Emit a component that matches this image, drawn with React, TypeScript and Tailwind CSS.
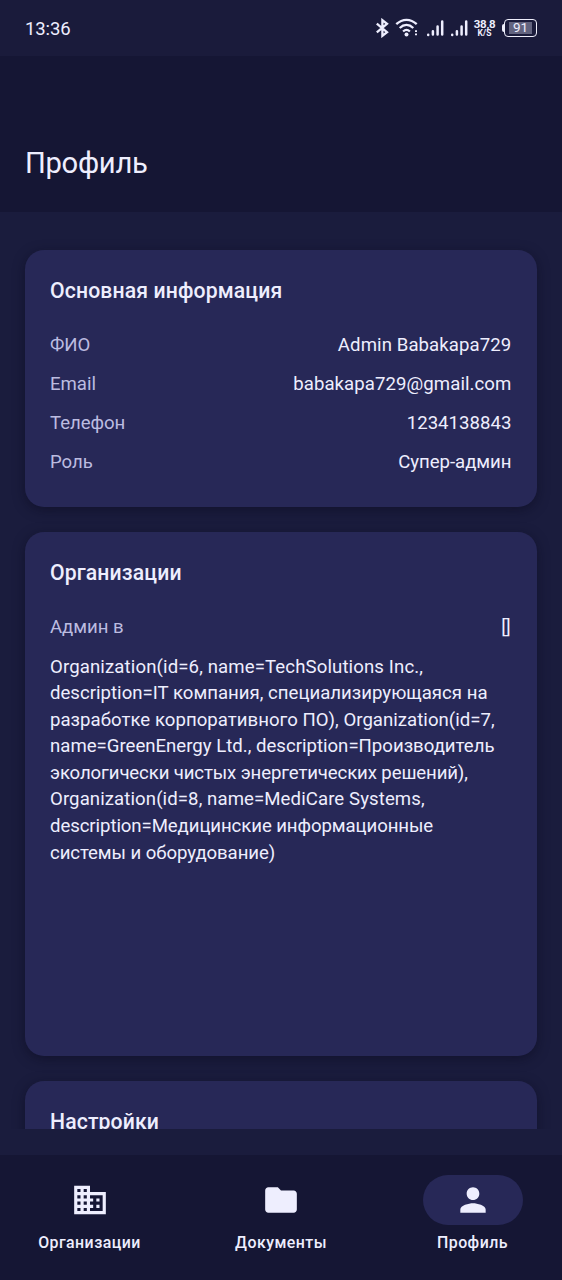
import type { ReactNode } from "react";

const profile = [
  { label: "ФИО", value: "Admin Babakapa729", tracking: "tracking-[0.09px]" },
  { label: "Email", value: "babakapa729@gmail.com", tracking: "tracking-[0.07px]" },
  { label: "Телефон", value: "1234138843", tracking: "tracking-[0.02px]" },
  { label: "Роль", value: "Супер-админ", tracking: "tracking-[-0.05px]" },
];

const organizationLines = [
  { text: "Organization(id=6, name=TechSolutions Inc.,", tracking: "tracking-[0.12px]" },
  { text: "description=IT компания, специализирующаяся на", tracking: "tracking-[0.01px]" },
  { text: "разработке корпоративного ПО), Organization(id=7,", tracking: "tracking-[0.03px]" },
  { text: "name=GreenEnergy Ltd., description=Производитель", tracking: "tracking-[0px]" },
  { text: "экологически чистых энергетических решений),", tracking: "tracking-[-0.12px]" },
  { text: "Organization(id=8, name=MediCare Systems,", tracking: "tracking-[0.09px]" },
  { text: "description=Медицинские информационные", tracking: "tracking-[-0.08px]" },
  { text: "системы и оборудование)", tracking: "tracking-[-0.08px]" },
];

function SignalIcon() {
  return (
    <svg className="h-[18px] w-[18px]" viewBox="0 0 18 18" fill="none" stroke="currentColor" strokeWidth="2.5" strokeLinecap="round">
      <path d="M2.2 15.8v.1M6.9 15.6v-3.3M11.6 15.6V7.4M16.2 15.6V2.4" />
    </svg>
  );
}

function StatusBar() {
  return (
    <div className="flex h-14 shrink-0 items-center justify-between bg-[#1a1b3b] px-[25px]">
      <span className="pt-[2px] text-[18.5px] leading-none tracking-[-0.1px]">13:36</span>
      <div className="flex items-center">
        <svg className="h-5 w-[14px]" viewBox="0 0 14 20" fill="none" stroke="currentColor" strokeWidth="2.3">
          <path d="M1.8 5.6 12 14.2 7.4 17.8V2.2L12 5.8 1.8 14.4" />
        </svg>
        <svg className="ml-[6px] h-5 w-6" viewBox="0 0 24 20" fill="none" stroke="currentColor" strokeWidth="2.3">
          <path d="M1.3 6.2C7.5.3 15.5.3 21.7 6.2M4.7 10c4.2-4 9.4-4 13.6 0M8.1 13.5c2.1-2 4.7-2 6.8 0" />
          <circle cx="11.5" cy="16.4" r="2" fill="currentColor" stroke="none" />
          <path d="M20 13.2h2M20 16.4h2" strokeWidth="1.8" />
        </svg>
        <div className="ml-[7px] flex gap-[6px]">
          <SignalIcon />
          <SignalIcon />
        </div>
        <div className="ml-[6px] flex w-[22px] flex-col items-center font-bold">
          <span className="text-[11.5px] leading-[10px] tracking-[-0.3px]">38,8</span>
          <span className="text-[8.5px] leading-[9px]">K/S</span>
        </div>
        <div className="ml-[6px] flex items-center">
          <span className="h-2 w-[2.5px] rounded-l-full bg-[#eeeefb]" />
          <div className="flex h-[18px] w-[33px] items-center justify-center rounded-[4px] border-[1.5px] border-[#eeeefb] px-[4px] py-[2px]">
            <span className="flex h-full w-full items-center justify-center bg-[#62637f] text-[13.5px] leading-none">91</span>
          </div>
        </div>
      </div>
    </div>
  );
}

function Card({ title, className, children }: { title: string; className: string; children?: ReactNode }) {
  return (
    <section className={`shrink-0 rounded-[19px] bg-[#272857] px-[25px] pt-[25px] shadow-[0_3px_12px_rgba(10,10,30,0.5)] ${className}`}>
      <h2 className="text-[21.2px] leading-[31.8px] font-medium tracking-[0.13px]">{title}</h2>
      {children}
    </section>
  );
}

function InfoRow({ label, value, tracking }: { label: string; value: string; tracking: string }) {
  return (
    <div className="flex h-[39px] items-center justify-between pr-[0.6px] text-[18.6px]">
      <span className="tracking-[-0.03px] text-[#bcbce0]">{label}</span>
      <span className={tracking}>{value}</span>
    </div>
  );
}

function NavItem({ label, active, path }: { label: string; active?: boolean; path: string }) {
  return (
    <button className="flex flex-1 flex-col items-center pt-5">
      <span className={`flex h-[50px] w-[100px] items-center justify-center rounded-full ${active ? "bg-[#272857]" : ""}`}>
        <svg className="h-[38px] w-[38px]" viewBox="0 0 24 24" fill="currentColor">
          <path d={path} />
        </svg>
      </span>
      <span className="mt-[7px] text-[15.9px] leading-[21px] font-medium tracking-[0.46px]">{label}</span>
    </button>
  );
}

export default function App() {
  return (
    <div className="flex h-[1280px] w-[562px] flex-col overflow-hidden bg-[#1a1c3d] font-[Roboto,sans-serif] text-[#eeeefe]">
      <StatusBar />
      <header className="flex h-[156px] shrink-0 items-end bg-[#151634] px-[25px] pb-[30px]">
        <h1 className="text-[29.2px] leading-[38px] tracking-[-0.3px]">Профиль</h1>
      </header>
      <main className="mb-[26px] flex min-h-0 flex-1 flex-col gap-[25px] overflow-hidden px-[25px] pt-[38px]">
        <Card title="Основная информация" className="h-[257px]">
          <div className="mt-[19.6px]">
            {profile.map((row) => (
              <InfoRow key={row.label} {...row} />
            ))}
          </div>
        </Card>
        <Card title="Организации" className="h-[524px]">
          <div className="mt-[19.6px]">
            <InfoRow label="Админ в" value="[]" tracking="tracking-[-0.3px] pr-px" />
          </div>
          <p className="mt-[6.3px] text-[18.6px] leading-[26.55px] whitespace-nowrap">
            {organizationLines.map(({ text, tracking }) => (
              <span key={text} className={`block ${tracking}`}>{text}</span>
            ))}
          </p>
        </Card>
        <Card title="Настройки" className="h-[257px]" />
      </main>
      <nav className="flex h-[125px] shrink-0 gap-[12.5px] bg-[#151634]">
        <NavItem
          label="Организации"
          path="M12 7V3H2v18h20V7H12zM6 19H4v-2h2v2zm0-4H4v-2h2v2zm0-4H4V9h2v2zm0-4H4V5h2v2zm4 12H8v-2h2v2zm0-4H8v-2h2v2zm0-4H8V9h2v2zm0-4H8V5h2v2zm10 12h-8v-2h2v-2h-2v-2h2v-2h-2V9h8v10zm-2-8h-2v2h2v-2zm0 4h-2v2h2v-2z"
        />
        <NavItem
          label="Документы"
          path="M10 4H4c-1.1 0-1.99.9-1.99 2L2 18c0 1.1.9 2 2 2h16c1.1 0 2-.9 2-2V8c0-1.1-.9-2-2-2h-8l-2-2z"
        />
        <NavItem
          label="Профиль"
          active
          path="M12 12c2.21 0 4-1.79 4-4s-1.79-4-4-4-4 1.79-4 4 1.79 4 4 4zm0 2c-2.67 0-8 1.34-8 4v2h16v-2c0-2.66-5.33-4-8-4z"
        />
      </nav>
    </div>
  );
}
